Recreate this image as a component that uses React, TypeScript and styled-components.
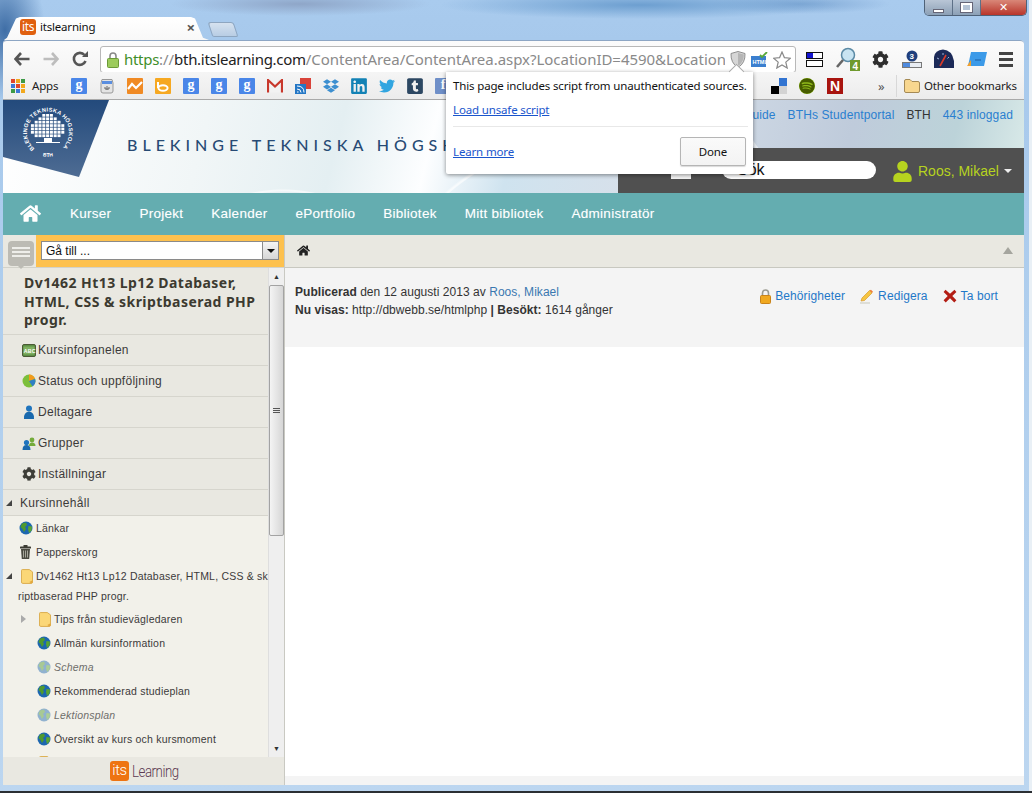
import React from 'react';
import styled, { createGlobalStyle } from 'styled-components';
import { FaCog, FaDropbox, FaHome, FaLinkedin, FaSpotify, FaTumblrSquare, FaTwitter, FaUser } from 'react-icons/fa';

const GlobalStyle = createGlobalStyle`
  html, body { margin: 0; padding: 0; width: 1032px; height: 793px; overflow: hidden; }
  * { box-sizing: border-box; }
  body { font-family: "Liberation Sans", Arial, sans-serif; }
`;

const chromeFont = `"Noto Sans", "Open Sans", sans-serif`;

const Globe = ({ faded }: { faded?: boolean }) => (
  <svg width="14" height="14" viewBox="0 0 14 14" style={{ opacity: faded ? 0.45 : 1, flex: 'none' }}>
    <circle cx="7" cy="7" r="6.5" fill="#1d67b0" />
    <path d="M3 2.5 L7 1.5 L8 4 L6 6 L7 8 L5 11 L3.5 8 L1.5 6 Z" fill="#4f9a2e" />
    <path d="M9.5 5 L13 5.5 L12.5 9.5 L10 12 L9 8 Z" fill="#5aa532" />
  </svg>
);

const Folder = () => (
  <svg width="12" height="15" viewBox="0 0 13 16" style={{ flex: 'none' }}>
    <path d="M1.5 .5 H9 L12.5 3 V14 Q12.5 15.5 11 15.5 H2 Q.5 15.5 .5 14 V1.5 Q.5 .5 1.5 .5 Z" fill="#fbd777" stroke="#d9a94a" />
    <path d="M9 14 L12.5 12 V14.5 L11 15.5 Z" fill="#e3a93f" />
  </svg>
);

const Trash = () => (
  <svg width="11" height="14" viewBox="0 0 11 14" style={{ flex: 'none', marginRight: 2 }}>
    <rect x="0" y="1.5" width="11" height="2" rx=".6" fill="#3c3c34" />
    <rect x="3.5" y="0" width="4" height="2" fill="#3c3c34" />
    <path d="M1 4 H10 L9.2 14 H1.8 Z" fill="#4a4a40" />
    <path d="M3.5 5.5 V12.5 M5.5 5.5 V12.5 M7.5 5.5 V12.5" stroke="#bdbdb0" strokeWidth=".8" />
  </svg>
);

const AbcIcon = () => (
  <svg width="14" height="13" viewBox="0 0 14 13">
    <rect x=".5" y=".5" width="13" height="12" rx="1.5" fill="#5d8f45" stroke="#4b5a35" />
    <rect x="1.5" y="2.5" width="11" height="8" fill="#7fb060" />
    <text x="1.8" y="9" fontSize="5.2" fontWeight="700" fill="#fff" fontFamily='"Liberation Sans", sans-serif'>ABC</text>
  </svg>
);

const PieIcon = () => (
  <svg width="14" height="14" viewBox="0 0 14 14">
    <circle cx="7" cy="7" r="6.5" fill="#7cbf3a" />
    <path d="M7 7 L7 .5 A6.5 6.5 0 0 1 13 5 Z" fill="#f29b1d" />
    <path d="M7 7 L13 5 A6.5 6.5 0 0 1 10.5 12.5 Z" fill="#2f7fc4" />
  </svg>
);

const PersonIcon = () => (
  <svg width="12" height="14" viewBox="0 0 12 14">
    <circle cx="6" cy="3.5" r="3" fill="#1f74bd" />
    <path d="M1 14 Q.5 7 6 6.5 Q11.5 7 11 14 Z" fill="#1a69ad" />
  </svg>
);

const GroupIcon = () => (
  <svg width="14" height="13" viewBox="0 0 14 13">
    <circle cx="10" cy="3" r="2.4" fill="#74ab3a" />
    <path d="M7 9 Q7 5.5 10 5.5 Q13.5 5.5 13.5 9 Z" fill="#74ab3a" />
    <circle cx="4.5" cy="5.5" r="2.6" fill="#1f74bd" />
    <path d="M.5 13 Q.5 8 4.5 8 Q8.5 8 8.5 13 Z" fill="#1a69ad" />
  </svg>
);

const LockSmall = () => (
  <svg width="11" height="15" viewBox="0 0 11 15">
    <path d="M2.5 7 V4 Q2.5 1 5.5 1 Q8.5 1 8.5 4 V7" fill="none" stroke="#9a9a90" strokeWidth="1.6" />
    <rect x=".5" y="6.5" width="10" height="8" rx="1" fill="#f0a81f" stroke="#c9831a" />
  </svg>
);

const Pencil = () => (
  <svg width="14" height="15" viewBox="0 0 14 15">
    <path d="M1 12 L2 9 L9.5 1.5 L12 4 L4.5 11.5 Z" fill="#f5c542" stroke="#d89a2b" strokeWidth=".7" />
    <path d="M9.5 1.5 L12 4 L13 2.8 L11 .7 Z" fill="#ef7d3a" />
    <path d="M0 14 H10" stroke="#d9d9d0" strokeWidth="1.6" />
  </svg>
);

const CrossIcon = () => (
  <svg width="14" height="14" viewBox="0 0 14 14">
    <path d="M2.5 .8 L7 4.8 L11.5 .8 L13.4 3 L9.3 7 L13.4 11.2 L11.3 13.4 L7 9.3 L2.7 13.4 L.6 11.2 L4.7 7 L.6 3 Z" fill="#b31d14" />
  </svg>
);

const canopy = [3, 5, 7, 9, 9, 9, 7];

const BthLogo = () => (
  <svg width="106" height="78" viewBox="0 0 106 78" style={{ flex: 'none', display: 'block' }}>
    <defs>
      <linearGradient id="bth" x1="0" y1="0" x2="0" y2="1">
        <stop offset="0" stopColor="#234a7c" />
        <stop offset="1" stopColor="#4e6c93" />
      </linearGradient>
      <path id="ring" d="M31.5 48.6 A 21 21 0 1 1 58.5 48.6" />
      <path id="ringLow" d="M36 55 A 24 24 0 0 0 54 55" />
    </defs>
    <polygon points="0,0 106,0 76,77 0,57" fill="url(#bth)" />
    <text fontFamily='"Liberation Sans", sans-serif' fontSize="5.6" fontWeight="700" fill="#fff">
      <textPath href="#ring" textLength="100">BLEKINGE TEKNISKA HÖGSKOLA</textPath>
    </text>
    <text fontFamily='"Liberation Sans", sans-serif' fontSize="5" fontWeight="700" fill="#fff" textAnchor="middle">
      <textPath href="#ringLow" startOffset="50%">BTH</textPath>
    </text>
    <g fill="#fff">
      {canopy.map((n, row) =>
        Array.from({ length: n }).map((_, i) => (
          <rect key={`${row}-${i}`} x={45 - n * 1.9 + i * 3.8} y={14 + row * 3.4} width="3" height="2.7" />
        ))
      )}
      <rect x="41" y="38" width="8" height="4" />
      <rect x="33" y="42" width="24" height="1" />
    </g>
  </svg>
);

const Apps = () => (
  <AppsGrid>
    {['#e0452c', '#f2a81d', '#3d9a46', '#3d78d8', '#e0452c', '#f2a81d', '#3d9a46', '#3d78d8', '#f2a81d'].map((c, i) => (
      <AppsDot key={i} $color={c} />
    ))}
  </AppsGrid>
);

const GoogleTile = () => <Tile $bg="#4a86e8">g</Tile>;

const Bookmarks = () => (
  <>
    <BookmarkSlot><GoogleTile /></BookmarkSlot>
    <BookmarkSlot>
      <svg width="16" height="16" viewBox="0 0 16 16">
        <path d="M2 5 L3 1.5 H13 L14 5 V13 Q14 15 12 15 H4 Q2 15 2 13 Z" fill="#e4e4e4" stroke="#999" />
        <rect x="3" y="3" width="10" height="3" fill="#5a8ee0" />
        <path d="M8 8 V12 M6 9 V11 H10 V9" stroke="#666" fill="none" />
      </svg>
    </BookmarkSlot>
    <BookmarkSlot>
      <svg width="16" height="16" viewBox="0 0 16 16">
        <rect width="16" height="16" rx="1" fill="#f08a24" />
        <path d="M1 11 L5 6 L9 10 L15 4" stroke="#fff" strokeWidth="2.2" fill="none" />
      </svg>
    </BookmarkSlot>
    <BookmarkSlot>
      <svg width="16" height="16" viewBox="0 0 16 16">
        <rect width="16" height="16" rx="1" fill="#f6a821" />
        <path d="M3 4 V10" stroke="#fff" strokeWidth="2" />
        <ellipse cx="8" cy="10" rx="4.6" ry="2.8" fill="none" stroke="#fff" strokeWidth="2" />
      </svg>
    </BookmarkSlot>
    <BookmarkSlot><GoogleTile /></BookmarkSlot>
    <BookmarkSlot><GoogleTile /></BookmarkSlot>
    <BookmarkSlot><GoogleTile /></BookmarkSlot>
    <BookmarkSlot>
      <svg width="16" height="14" viewBox="0 0 16 14">
        <rect x=".5" y=".5" width="15" height="13" fill="#f2f2f2" />
        <path d="M1 13.5 V1 L8 7.5 L15 1 V13.5" fill="none" stroke="#c8372b" strokeWidth="2.2" />
      </svg>
    </BookmarkSlot>
    <BookmarkSlot>
      <svg width="16" height="16" viewBox="0 0 16 16">
        <rect x="5" y="0" width="11" height="11" fill="#d9433a" />
        <rect x="0" y="6" width="11" height="10" fill="#2477c5" />
        <path d="M2 14 H3.5 M2 11 Q6 11 6 14.5 M2 8 Q9 8 9 14.5" stroke="#fff" fill="none" />
      </svg>
    </BookmarkSlot>
    <BookmarkSlot><FaDropbox size={16} color="#3d8fd0" /></BookmarkSlot>
    <BookmarkSlot><FaLinkedin size={18} color="#1382b5" /></BookmarkSlot>
    <BookmarkSlot><FaTwitter size={16} color="#31a5e0" /></BookmarkSlot>
    <BookmarkSlot><FaTumblrSquare size={18} color="#2c4762" /></BookmarkSlot>
    <BookmarkSlot><Tile $bg="#6f8fc8">f</Tile></BookmarkSlot>
  </>
);

const sideRows = [
  { label: 'Kursinfopanelen', icon: <AbcIcon /> },
  { label: 'Status och uppföljning', icon: <PieIcon /> },
  { label: 'Deltagare', icon: <PersonIcon /> },
  { label: 'Grupper', icon: <GroupIcon /> },
  { label: 'Inställningar', icon: <FaCog size={14} color="#3e3e38" /> },
];

const navItems = ['Kurser', 'Projekt', 'Kalender', 'ePortfolio', 'Bibliotek', 'Mitt bibliotek', 'Administratör'];

export default function App() {
  return (
    <Desktop>
      <GlobalStyle />
      <TitleStrip>
        <Tab>
          <TabFavicon>its</TabFavicon>
          <TabTitle>itslearning</TabTitle>
          <TabClose>×</TabClose>
        </Tab>
        <NewTab />
        <WindowControls>
          <WinButton><MinGlyph /></WinButton>
          <WinButton><MaxGlyph /></WinButton>
          <CloseButton>✕</CloseButton>
        </WindowControls>
      </TitleStrip>

      <Browser>
        <Toolbar>
          <NavArrow viewBox="0 0 16 14">
            <path d="M7 1 L1.5 7 L7 13 M2 7 H15.5" fill="none" stroke="#555" strokeWidth="2.6" />
          </NavArrow>
          <NavArrow viewBox="0 0 16 14">
            <path d="M9 1 L14.5 7 L9 13 M14 7 H.5" fill="none" stroke="#bdbdbd" strokeWidth="2.6" />
          </NavArrow>
          <NavArrow viewBox="0 0 16 16">
            <path d="M13.5 10 A6 6 0 1 1 12.5 4" fill="none" stroke="#555" strokeWidth="2.6" />
            <path d="M10 6 H16 V0 Z" fill="#555" />
          </NavArrow>
          <Omnibox>
            <svg width="12" height="16" viewBox="0 0 12 16" style={{ flex: 'none' }}>
              <path d="M3 7 V4 Q3 1 6 1 Q9 1 9 4 V7" fill="none" stroke="#8a8a8a" strokeWidth="1.6" />
              <rect x=".5" y="6.5" width="11" height="9" rx="1" fill="#9ccb5c" stroke="#6b9a38" />
            </svg>
            <UrlText>
              <Https>https</Https>
              <UrlFaint>://</UrlFaint>
              <UrlHost>bth.itslearning.com</UrlHost>
              <UrlFaint>/ContentArea/ContentArea.aspx?LocationID=4590&amp;Location</UrlFaint>
            </UrlText>
            <svg width="16" height="17" viewBox="0 0 16 17" style={{ flex: 'none' }}>
              <path d="M8 .5 L15 2.5 Q15.5 12 8 16.5 Q.5 12 1 2.5 Z" fill="#d6d6d6" stroke="#8f8f8f" />
              <path d="M8 2 V15 Q14 11 13.8 3.5 Z" fill="#b5b5b5" />
            </svg>
            <svg width="17" height="16" viewBox="0 0 17 16" style={{ flex: 'none' }}>
              <rect x="0" y="4" width="15" height="11" fill="#3b7fcf" />
              <text x="1.5" y="12" fontSize="5.5" fontWeight="700" fill="#fff" fontFamily='"Liberation Sans", sans-serif'>HTML</text>
              <path d="M9 3 L11 5 L16 0" stroke="#58a83a" strokeWidth="1.8" fill="none" />
            </svg>
            <svg width="18" height="18" viewBox="0 0 18 18" style={{ flex: 'none' }}>
              <path d="M9 1 L11.4 6.6 L17.3 7.2 L12.8 11.1 L14.2 17 L9 13.9 L3.8 17 L5.2 11.1 L.7 7.2 L6.6 6.6 Z" fill="#fff" stroke="#8a8a8a" strokeWidth="1.2" />
            </svg>
          </Omnibox>
          <Extensions>
            <svg width="17" height="15" viewBox="0 0 17 15">
              <rect x=".5" y=".5" width="16" height="6" fill="#fff" stroke="#111" />
              <rect x="1" y="1" width="6" height="5" fill="#1414d0" />
              <rect x=".5" y="8.5" width="16" height="6" fill="#fff" stroke="#111" />
            </svg>
            <svg width="24" height="24" viewBox="0 0 24 24">
              <circle cx="12" cy="8" r="6.5" fill="#c8e4f2" stroke="#5b8aa5" strokeWidth="1.5" />
              <path d="M7 13 L1 20" stroke="#666" strokeWidth="2.6" />
              <rect x="14" y="13" width="10" height="11" fill="#6f9a2e" />
              <text x="16.5" y="22.5" fontSize="10" fontWeight="700" fill="#fff" fontFamily='"Liberation Sans", sans-serif'>4</text>
            </svg>
            <FaCog size={17} color="#2e2e2e" />
            <svg width="20" height="19" viewBox="0 0 20 19">
              <circle cx="10" cy="6" r="5.5" fill="#1f3f7d" />
              <text x="7.6" y="9" fontSize="8" fontWeight="700" fill="#fff" fontFamily='"Liberation Sans", sans-serif'>3</text>
              <rect x=".5" y="12.5" width="19" height="5" fill="#e8ecf2" stroke="#777" />
              <rect x="1" y="13" width="7" height="4" fill="#4e8ade" />
            </svg>
            <svg width="20" height="20" viewBox="0 0 20 20">
              <path d="M0 19 V8 Q1 1 9 .5 Q18 1 20 12 V19 Z" fill="#1c2a58" />
              <path d="M6 17 L12 6" stroke="#d93a2a" strokeWidth="1.6" />
              <path d="M3 9 L5 10 M9 4 V6 M15 8 L13.5 9.5" stroke="#9fb0d5" />
            </svg>
            <svg width="20" height="16" viewBox="0 0 20 16">
              <path d="M4 1 H20 L17 15 H1 Z" fill="#3c9ae8" />
              <path d="M0 15 L4 9 V15 Z" fill="#f2a02c" />
              <path d="M8 9 H14" stroke="#1c5fa5" />
            </svg>
            <MenuBars><MenuBar /><MenuBar /><MenuBar /></MenuBars>
          </Extensions>
        </Toolbar>

        <BookmarkBar>
          <AppsItem><Apps /><span>Apps</span></AppsItem>
          <Bookmarks />
          <BarSpacer />
          <BookmarkSlot>
            <svg width="16" height="16" viewBox="0 0 16 16">
              <rect x="8" width="8" height="8" fill="#3274d1" />
              <rect y="8" width="8" height="8" fill="#000" />
              <rect x="8" y="8" width="8" height="8" fill="#d3d3d3" />
            </svg>
          </BookmarkSlot>
          <BookmarkSlot><FaSpotify size={16} color="#475c00" style={{ background: '#8eb91a', borderRadius: '50%' }} /></BookmarkSlot>
          <BookmarkSlot><NetflixTile>N</NetflixTile></BookmarkSlot>
          <Chevrons>»</Chevrons>
          <OtherBookmarks>
            <svg width="16" height="14" viewBox="0 0 16 14">
              <path d="M.5 2 Q.5 .5 2 .5 H6 L8 2.5 H14 Q15.5 2.5 15.5 4 V12 Q15.5 13.5 14 13.5 H2 Q.5 13.5 .5 12 Z" fill="#f8d78f" stroke="#a58a55" />
            </svg>
            <span>Other bookmarks</span>
          </OtherBookmarks>
        </BookmarkBar>

        <Banner>
          <BannerLeft>
            <BthLogo />
            <BannerTitle>BLEKINGE TEKNISKA HÖGSKOLA</BannerTitle>
          </BannerLeft>
          <BannerRight>
            <TopLinks>
              <TopLink>Användarguide</TopLink>
              <TopLink>BTHs Studentportal</TopLink>
              <TopPlain>BTH</TopPlain>
              <TopLink>443 inloggad</TopLink>
            </TopLinks>
            <DarkPanel>
              <SearchToggle />
              <SearchField>Sök</SearchField>
              <FaUser size={21} color="#b6d31f" />
              <UserName>Roos, Mikael</UserName>
              <UserCaret />
            </DarkPanel>
          </BannerRight>
        </Banner>

        <MainNav>
          <FaHome size={21} color="#fff" />
          <NavLinks>
            {navItems.map((n) => <NavLink key={n}>{n}</NavLink>)}
          </NavLinks>
        </MainNav>

        <Split>
          <Sidebar>
            <SideTop>
              <ChatButton>
                <ChatLine /><ChatLine /><ChatLine />
              </ChatButton>
              <GotoBar>
                <GotoSelect>
                  <span>Gå till ...</span>
                  <GotoArrow />
                </GotoSelect>
              </GotoBar>
            </SideTop>
            <SideBody>
              <SideList>
                <CourseTitle>Dv1462 Ht13 Lp12 Databaser, HTML, CSS &amp; skriptbaserad PHP progr.</CourseTitle>
                {sideRows.map((r) => (
                  <SideRow key={r.label}>
                    <SideIcon>{r.icon}</SideIcon>
                    {r.label}
                  </SideRow>
                ))}
                <SectionHead>
                  <ExpandedMark />
                  Kursinnehåll
                </SectionHead>
                <Tree>
                  <TreeRow $indent={16}><Globe />Länkar</TreeRow>
                  <TreeRow $indent={17}><Trash />Papperskorg</TreeRow>
                  <TreeWrapRow>
                    <TreeWrapFirst>
                      <ExpandedMark />
                      <Folder />
                      <span>Dv1462 Ht13 Lp12 Databaser, HTML, CSS &amp; sk</span>
                    </TreeWrapFirst>
                    <TreeWrapSecond>riptbaserad PHP progr.</TreeWrapSecond>
                  </TreeWrapRow>
                  <TreeRow $indent={18}><CollapsedMark /><Folder />Tips från studievägledaren</TreeRow>
                  <TreeRow $indent={34}><Globe />Allmän kursinformation</TreeRow>
                  <TreeRow $indent={34} $muted><Globe faded />Schema</TreeRow>
                  <TreeRow $indent={34}><Globe />Rekommenderad studieplan</TreeRow>
                  <TreeRow $indent={34} $muted><Globe faded />Lektionsplan</TreeRow>
                  <TreeRow $indent={34}><Globe />Översikt av kurs och kursmoment</TreeRow>
                  <TreeRow $indent={36}><Folder /></TreeRow>
                </Tree>
              </SideList>
              <Scrollbar>
                <ScrollArrow>▲</ScrollArrow>
                <ScrollThumb>
                  <Grip /><Grip /><Grip />
                </ScrollThumb>
                <ScrollTrack />
                <ScrollArrow>▼</ScrollArrow>
              </Scrollbar>
            </SideBody>
            <SideFooter>
              <FooterIts>its</FooterIts>
              <FooterWord>Learning</FooterWord>
            </SideFooter>
          </Sidebar>

          <Content>
            <Breadcrumb>
              <FaHome size={13} color="#222" />
              <CollapseMark />
            </Breadcrumb>
            <InfoBar>
              <InfoText>
                <div><strong>Publicerad</strong> den 12 augusti 2013 av <InfoLink>Roos, Mikael</InfoLink></div>
                <div><strong>Nu visas:</strong> http://dbwebb.se/htmlphp <strong>| Besökt:</strong> 1614 gånger</div>
              </InfoText>
              <Actions>
                <ActionLink><LockSmall />Behörigheter</ActionLink>
                <ActionLink><Pencil />Redigera</ActionLink>
                <ActionLink><CrossIcon />Ta bort</ActionLink>
              </Actions>
            </InfoBar>
            <Blank />
            <BottomStrip />
          </Content>
        </Split>
      </Browser>

      <Bubble>
        <BubbleArrow />
        <BubbleText>This page includes script from unauthenticated sources.</BubbleText>
        <BubbleLink>Load unsafe script</BubbleLink>
        <BubbleRule />
        <BubbleFoot>
          <BubbleLink>Learn more</BubbleLink>
          <DoneButton>Done</DoneButton>
        </BubbleFoot>
      </Bubble>
    </Desktop>
  );
}

const Desktop = styled.div`
  position: relative;
  width: 1032px;
  height: 793px;
  overflow: hidden;
  padding: 0 8px 8px 3px;
  display: flex;
  flex-direction: column;
  background:
    linear-gradient(180deg, transparent 791px, #2b2f33 791px),
    linear-gradient(90deg, transparent 1029px, #e9f0f6 1029px),
    radial-gradient(ellipse 40px 70px at 5px 30px, #3f6ea6 0%, #3f6ea600 100%),
    radial-gradient(ellipse 200px 14px at 640px 5px, #6d9fd0 0%, #6d9fd000 100%),
    radial-gradient(ellipse 130px 12px at 300px 4px, #8fa6c8 0%, #8fa6c800 100%),
    radial-gradient(ellipse 90px 10px at 800px 4px, #7fa8d5 0%, #7fa8d500 100%),
    linear-gradient(180deg, #a9cbee 0%, #a7c9ec 40px, #bcd6f0 100%);
`;

const TitleStrip = styled.div`
  height: 40px;
  display: flex;
  align-items: flex-end;
  flex: none;
`;

const Tab = styled.div`
  width: 205px;
  height: 23px;
  margin-left: 1px;
  padding: 0 14px 3px 16px;
  display: flex;
  align-items: center;
  background: linear-gradient(180deg, #ffffff 0%, #f8f8f8 100%);
  clip-path: polygon(0 100%, 3px 90%, 12px 6%, 16px 0, 187px 0, 191px 6%, 199px 90%, 205px 100%);
`;

const TabFavicon = styled.div`
  width: 16px;
  height: 16px;
  border-radius: 3px;
  background: #e0600f;
  color: #fff;
  font: 12px/16px ${chromeFont};
  text-align: center;
  letter-spacing: -0.4px;
`;

const TabTitle = styled.div`
  margin-left: 4px;
  flex: 1;
  font: 11.5px/16px ${chromeFont};
  letter-spacing: -0.2px;
  color: #111;
`;

const TabClose = styled.div`
  font: 700 15px/16px ${chromeFont};
  color: #555;
`;

const NewTab = styled.div`
  width: 26px;
  height: 15px;
  margin: 0 0 3px 1px;
  background: linear-gradient(180deg, #d6e2ef, #b8cde4);
  border: 1px solid #8ea6c0;
  border-radius: 3px 3px 2px 2px;
  transform: skewX(18deg);
`;

const WindowControls = styled.div`
  margin-left: auto;
  margin-right: -3px;
  align-self: flex-start;
  width: 103px;
  height: 16px;
  display: flex;
  border: 1px solid #4f6278;
  border-top: 0;
  border-radius: 0 0 5px 5px;
  overflow: hidden;
`;

const WinButton = styled.div`
  width: 28px;
  display: flex;
  align-items: center;
  justify-content: center;
  background: linear-gradient(180deg, #b9c6d6, #8ca0b6);
  border-right: 1px solid #5d7087;
`;

const MinGlyph = styled.div`
  width: 11px;
  height: 4px;
  margin-top: 6px;
  background: #fff;
  border: 1px solid #667;
`;

const MaxGlyph = styled.div`
  width: 11px;
  height: 9px;
  background: #b5c4d6;
  border: 2px solid #fff;
  outline: 1px solid #667;
`;

const CloseButton = styled.div`
  flex: 1;
  text-align: center;
  background: linear-gradient(180deg, #d98778, #b8352a);
  color: #fff;
  font: 700 11px/15px "DejaVu Sans", sans-serif;
`;

const Browser = styled.div`
  flex: 1;
  min-height: 0;
  display: flex;
  flex-direction: column;
  background: #fff;
  border-radius: 4px 4px 0 0;
`;

const Toolbar = styled.div`
  height: 32px;
  flex: none;
  padding: 5px 11px 0 11px;
  display: flex;
  align-items: flex-start;
  background: linear-gradient(180deg, #fbfbfb, #f5f5f5);
  border-radius: 4px 4px 0 0;
  border-top: 1px solid #8da6c4;
`;

const NavArrow = styled.svg`
  width: 16px;
  height: 16px;
  margin: 5px 13px 0 0;
  flex: none;
`;

const Omnibox = styled.div`
  width: 696px;
  height: 27px;
  margin-left: -1px;
  padding: 0 4px 0 6px;
  display: flex;
  align-items: center;
  gap: 5px;
  background: #fff;
  border: 1px solid #b8b8b8;
  border-radius: 3px;
`;

const UrlText = styled.div`
  flex: 1;
  min-width: 0;
  overflow: hidden;
  white-space: nowrap;
  font: 15px/25px ${chromeFont};
  letter-spacing: -0.3px;
`;

const Https = styled.span`
  color: #3f8f2a;
`;

const UrlFaint = styled.span`
  color: #8a8a8a;
  letter-spacing: -0.03px;
`;

const UrlHost = styled.span`
  color: #222;
`;

const Extensions = styled.div`
  margin-left: 10px;
  flex: 1;
  display: flex;
  align-items: center;
  justify-content: space-between;
  height: 26px;
`;

const MenuBars = styled.div`
  display: flex;
  flex-direction: column;
  gap: 3px;
`;

const MenuBar = styled.div`
  width: 14px;
  height: 3px;
  background: #444;
`;

const BookmarkBar = styled.div`
  height: 28px;
  flex: none;
  padding: 0 4px 0 8px;
  display: flex;
  align-items: center;
  background: linear-gradient(180deg, #f5f5f5, #ececec);
  border-bottom: 1px solid #a9a9a9;
  font: 11.5px/16px ${chromeFont};
  letter-spacing: -0.15px;
  color: #222;
`;

const AppsItem = styled.div`
  width: 54px;
  display: flex;
  align-items: center;
  gap: 7px;
`;

const AppsGrid = styled.div`
  display: grid;
  grid-template-columns: repeat(3, 4px);
  gap: 1px;
`;

const AppsDot = styled.div<{ $color: string }>`
  width: 4px;
  height: 4px;
  background: ${(p) => p.$color};
`;

const BookmarkSlot = styled.div`
  width: 28px;
  display: flex;
  justify-content: center;
  align-items: center;
  flex: none;
`;

const Tile = styled.div<{ $bg: string }>`
  width: 16px;
  height: 16px;
  border-radius: 1px;
  background: ${(p) => p.$bg};
  color: #fff;
  text-align: center;
  font: 700 14px/14px "Liberation Serif", serif;
`;

const NetflixTile = styled.div`
  width: 16px;
  height: 16px;
  background: #a8140f;
  color: #fff;
  text-align: center;
  font: 700 14px/16px "Liberation Sans", sans-serif;
`;

const BarSpacer = styled.div`
  flex: 1;
`;

const Chevrons = styled.div`
  width: 47px;
  padding-left: 29px;
  color: #555;
  font-size: 13px;
`;

const OtherBookmarks = styled.div`
  width: 124px;
  height: 22px;
  padding-left: 7px;
  display: flex;
  align-items: center;
  gap: 4px;
  border-left: 1px solid #d8d8d8;
  white-space: nowrap;
`;

const Banner = styled.div`
  height: 93px;
  flex: none;
  display: flex;
  justify-content: space-between;
  background:
    radial-gradient(circle at 280px 240px, transparent 148px, #ffffff99 149px, #ffffff99 150px, transparent 151px),
    radial-gradient(circle at 590px 260px, transparent 220px, #ffffffaa 221px, #ffffffaa 222px, transparent 224px),
    radial-gradient(circle at 900px -60px, transparent 180px, #ffffff88 181px, #ffffff88 183px, transparent 184px),
    linear-gradient(104deg, #ffffff 0%, #f1f6f7 20%, #e4eff2 33%, #fdfeff 42%, #cfe3ef 50%, #d7e0ea 62%, #bfcbdb 82%, #bcd3d9 92%, #dcecea 100%);
`;

const BannerLeft = styled.div`
  display: flex;
  align-items: flex-start;
`;

const BannerTitle = styled.div`
  margin: 35px 0 0 18px;
  font: 500 16px/20px Lato, "Open Sans", sans-serif;
  letter-spacing: 5px;
  color: #274a74;
  white-space: nowrap;
`;

const BannerRight = styled.div`
  width: 406px;
  display: flex;
  flex-direction: column;
  justify-content: space-between;
`;

const TopLinks = styled.div`
  padding: 7px 11px 0 0;
  display: flex;
  justify-content: flex-end;
  gap: 12px;
  font-size: 12px;
  line-height: 16px;
  letter-spacing: 0.12px;
  white-space: nowrap;
`;

const TopLink = styled.div`
  color: #2a7fd0;
`;

const TopPlain = styled.div`
  color: #333;
`;

const DarkPanel = styled.div`
  height: 45px;
  padding: 13px 11px 0 53px;
  display: flex;
  align-items: flex-start;
  background: #505050;
`;

const SearchToggle = styled.div`
  width: 20px;
  height: 18px;
  background: #f4f4f4;
  flex: none;
`;

const SearchField = styled.div`
  width: 154px;
  height: 18px;
  margin: 0 16px 0 31px;
  padding-left: 15px;
  flex: none;
  background: #fff;
  border-radius: 9px;
  color: #111;
  font-size: 16px;
  line-height: 18px;
`;

const UserName = styled.div`
  margin-left: 5px;
  color: #b6d31f;
  font-size: 14px;
  line-height: 20px;
`;

const UserCaret = styled.div`
  width: 0;
  height: 0;
  margin: 8px 0 0 5px;
  border: 4px solid transparent;
  border-top: 4px solid #eee;
`;

const MainNav = styled.div`
  height: 42px;
  flex: none;
  padding: 0 0 2px 17px;
  display: flex;
  align-items: center;
  background: #64adb0;
`;

const NavLinks = styled.div`
  margin-left: 29px;
  display: flex;
  gap: 28px;
`;

const NavLink = styled.div`
  color: #fff;
  font-size: 13.5px;
  letter-spacing: 0.27px;
  white-space: nowrap;
  text-shadow: 0 0 1px #ffffff55;
`;

const Split = styled.div`
  flex: 1;
  min-height: 0;
  display: flex;
`;

const Sidebar = styled.div`
  width: 282px;
  flex: none;
  display: flex;
  flex-direction: column;
  border-right: 1px solid #c9c9c2;
`;

const SideTop = styled.div`
  height: 33px;
  flex: none;
  display: flex;
  background: #e9e8e1;
  border-bottom: 1px solid #d2d2ca;
`;

const ChatButton = styled.div`
  position: relative;
  width: 26px;
  height: 25px;
  margin: 6px 2px 0 5px;
  flex: none;
  padding: 6px 4px 0;
  display: flex;
  flex-direction: column;
  gap: 2px;
  background: #bcbbb4;
  border-radius: 4px;

  &::after {
    content: '';
    position: absolute;
    left: 10px;
    bottom: -3px;
    border: 3px solid transparent;
    border-top-color: #bcbbb4;
    border-bottom: 0;
  }
`;

const ChatLine = styled.div`
  height: 2px;
  background: #eeeeea;
`;

const GotoBar = styled.div`
  flex: 1;
  padding: 6px 5px 0 5px;
  background: #fdc14e;
`;

const GotoSelect = styled.div`
  height: 19px;
  padding-left: 4px;
  display: flex;
  align-items: center;
  justify-content: space-between;
  background: #fff;
  border: 1px solid #8a8a8a;
  font-size: 12px;
  color: #111;
`;

const GotoArrow = styled.div`
  width: 16px;
  height: 17px;
  background: linear-gradient(180deg, #f4f4f4, #d6d6d6);
  border-left: 1px solid #8a8a8a;
  display: flex;
  align-items: center;
  justify-content: center;

  &::after {
    content: '';
    border: 4px solid transparent;
    border-top: 4px solid #111;
    border-bottom: 0;
  }
`;

const SideBody = styled.div`
  flex: 1;
  min-height: 0;
  display: flex;
`;

const SideList = styled.div`
  flex: 1;
  min-width: 0;
  overflow: hidden;
  display: flex;
  flex-direction: column;
  background: #e9e8e1;
`;

const CourseTitle = styled.div`
  height: 67px;
  flex: none;
  padding: 6px 2px 0 21px;
  font: 700 14px/18.5px "Noto Sans", sans-serif;
  letter-spacing: 0.45px;
  color: #3c3a30;
  border-bottom: 1px solid #d6d5cd;
`;

const SideRow = styled.div`
  height: 31px;
  flex: none;
  padding-left: 17px;
  display: flex;
  align-items: center;
  font-size: 12px;
  letter-spacing: 0.27px;
  color: #3c3a3a;
  border-bottom: 1px solid #d6d5cd;
`;

const SideIcon = styled.div`
  width: 18px;
  display: flex;
  align-items: center;
  justify-content: center;
  flex: none;
`;

const SectionHead = styled.div`
  height: 26px;
  flex: none;
  padding-left: 3px;
  display: flex;
  align-items: center;
  gap: 8px;
  font-size: 12px;
  letter-spacing: 0.3px;
  color: #3c3a3a;
  border-bottom: 1px solid #d6d5cd;
`;

const ExpandedMark = styled.div`
  width: 0;
  height: 0;
  flex: none;
  border-style: solid;
  border-width: 0 0 6px 6px;
  border-color: transparent transparent #444 transparent;
`;

const CollapsedMark = styled.div`
  width: 0;
  height: 0;
  flex: none;
  margin-right: 10px;
  border-style: solid;
  border-width: 4px 0 4px 5px;
  border-color: transparent transparent transparent #aaa;
`;

const Tree = styled.div`
  flex: 1;
  background: #f2f1ea;
  font-size: 10.5px;
  letter-spacing: 0.2px;
  color: #3c3a3a;
`;

const TreeRow = styled.div<{ $indent: number; $muted?: boolean }>`
  height: 24px;
  padding-left: ${(p) => p.$indent}px;
  display: flex;
  align-items: center;
  gap: 3px;
  white-space: nowrap;
  color: ${(p) => (p.$muted ? '#6e6e6a' : '#3c3a3a')};
  font-style: ${(p) => (p.$muted ? 'italic' : 'normal')};
`;

const TreeWrapRow = styled.div`
  height: 43px;
`;

const TreeWrapFirst = styled.div`
  height: 24px;
  padding-left: 3px;
  display: flex;
  align-items: center;
  gap: 3px;
  white-space: nowrap;

  & > div {
    margin-right: 6px;
  }
`;

const TreeWrapSecond = styled.div`
  padding-left: 15px;
  line-height: 16px;
`;

const Scrollbar = styled.div`
  width: 16px;
  flex: none;
  display: flex;
  flex-direction: column;
  background: #efefef;
  border-left: 1px solid #dedede;
`;

const ScrollArrow = styled.div`
  height: 17px;
  flex: none;
  font-size: 7px;
  line-height: 17px;
  text-align: center;
  color: #333;
`;

const ScrollThumb = styled.div`
  height: 251px;
  flex: none;
  display: flex;
  flex-direction: column;
  align-items: center;
  justify-content: center;
  gap: 1px;
  background: linear-gradient(90deg, #f4f4f4, #d6d6d6);
  border: 1px solid #a3a3a3;
  border-radius: 2px;
`;

const Grip = styled.div`
  width: 7px;
  height: 1px;
  background: #555;
`;

const ScrollTrack = styled.div`
  flex: 1;
`;

const SideFooter = styled.div`
  height: 28px;
  flex: none;
  display: flex;
  align-items: center;
  padding-left: 107px;
  background: #e9e8e1;
`;

const FooterIts = styled.div`
  width: 19px;
  height: 20px;
  border-radius: 3px;
  background: #ee7412;
  color: #fff;
  font: 300 15px/19px Roboto, sans-serif;
  text-align: center;
  letter-spacing: -0.4px;
`;

const FooterWord = styled.div`
  margin-left: 3px;
  color: #5c3a52;
  font: 300 17px/20px Roboto, sans-serif;
  letter-spacing: -0.6px;
  transform: scaleX(0.78);
  transform-origin: left center;
  white-space: nowrap;
`;

const Content = styled.div`
  flex: 1;
  min-width: 0;
  display: flex;
  flex-direction: column;
`;

const Breadcrumb = styled.div`
  height: 33px;
  flex: none;
  padding: 0 11px 1px 12px;
  display: flex;
  align-items: center;
  justify-content: space-between;
  background: #e9e8e1;
  border-bottom: 1px solid #c8c8c0;
`;

const CollapseMark = styled.div`
  width: 0;
  height: 0;
  border-style: solid;
  border-width: 0 5.5px 7px 5.5px;
  border-color: transparent transparent #a5a59e transparent;
`;

const InfoBar = styled.div`
  height: 79px;
  flex: none;
  padding: 15px 26px 0 10px;
  display: flex;
  justify-content: space-between;
  background: #f4f4f4;
`;

const InfoText = styled.div`
  font-size: 12px;
  line-height: 18px;
  letter-spacing: 0.04px;
  color: #333;
`;

const InfoLink = styled.span`
  color: #3a78b0;
`;

const Actions = styled.div`
  padding-top: 4px;
  display: flex;
  gap: 15px;
`;

const ActionLink = styled.div`
  display: flex;
  align-items: center;
  height: 18px;
  gap: 4px;
  color: #1f78c8;
  font-size: 12px;
  letter-spacing: 0.1px;
`;

const Blank = styled.div`
  flex: 1;
  background: #fff;
`;

const BottomStrip = styled.div`
  height: 9px;
  flex: none;
  background: #f4f4f4;
`;

const Bubble = styled.div`
  position: absolute;
  left: 446px;
  top: 72px;
  width: 307px;
  height: 102px;
  padding: 6px 6px 0 7px;
  background: #fff;
  border-radius: 0 0 2px 2px;
  box-shadow: 0 1px 4px rgba(0, 0, 0, 0.45);
  font-family: ${chromeFont};
  font-size: 11.5px;
  letter-spacing: -0.15px;
  color: #111;
`;

const BubbleArrow = styled.div`
  position: absolute;
  top: -6px;
  left: 285px;
  width: 11px;
  height: 11px;
  background: #fff;
  transform: rotate(45deg);
  border-left: 1px solid #aaa;
  border-top: 1px solid #aaa;
`;

const BubbleText = styled.div`
  position: relative;
  line-height: 16px;
  white-space: nowrap;
`;

const BubbleLink = styled.div`
  margin-top: 8px;
  line-height: 16px;
  color: #1a55cc;
  text-decoration: underline;
`;

const BubbleRule = styled.div`
  height: 1px;
  margin-top: 8px;
  margin-right: -1px;
  background: #e8e8e8;
`;

const BubbleFoot = styled.div`
  margin-top: 10px;
  display: flex;
  align-items: center;
  justify-content: space-between;

  & > ${BubbleLink} {
    margin-top: 1px;
  }
`;

const DoneButton = styled.div`
  width: 66px;
  height: 29px;
  margin-right: 1px;
  text-align: center;
  line-height: 27px;
  background: linear-gradient(180deg, #fafafa, #f3f3f3);
  border: 1px solid #b5b5b5;
  border-radius: 2px;
  box-shadow: 0 1px 1px rgba(0, 0, 0, 0.15);
`;
